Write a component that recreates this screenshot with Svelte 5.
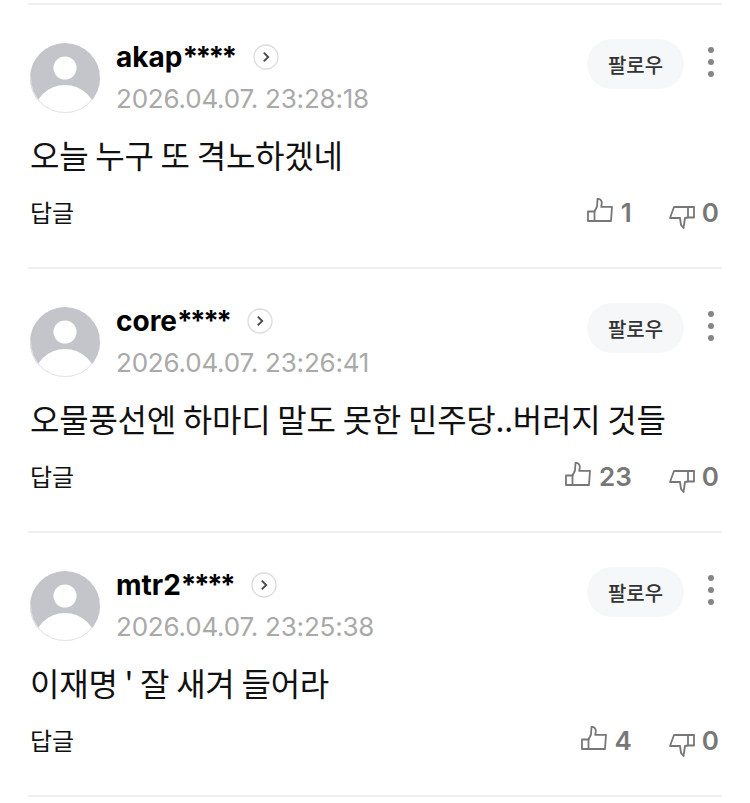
<script>
	const comments = [
		{ name: 'akap', date: '2026.04.07. 23:28:18', text: '오늘 누구 또 격노하겠네', likes: 1, dislikes: 0 },
		{ name: 'core', date: '2026.04.07. 23:26:41', text: '오물풍선엔 하마디 말도 못한 민주당..버러지 것들', likes: 23, dislikes: 0 },
		{ name: 'mtr2', date: '2026.04.07. 23:25:38', text: "이재명 ' 잘 새겨 들어라", likes: 4, dislikes: 0 }
	];
</script>

<div class="list">
	{#each comments as c, i}
		<div class="comment">
			<div class="head">
				<svg class="avatar" viewBox="0 0 70 70" width="70" height="70">
					<defs>
						<clipPath id="round{i}"><circle cx="35" cy="35" r="35" /></clipPath>
					</defs>
					<g clip-path="url(#round{i})">
						<rect width="70" height="70" fill="#c4c5ca" />
						<circle cx="35" cy="25" r="11.5" fill="#fff" />
						<ellipse cx="35" cy="72" rx="31" ry="30" fill="#fff" />
					</g>
					<circle cx="35" cy="35" r="34.5" fill="none" stroke="#e4e4e6" stroke-width="1" stroke-dasharray="88 132" stroke-dashoffset="-22" />
				</svg>
				<div class="who">
					<div class="name-row">
						<span class="name">{c.name}<span class="stars">****</span></span>
						<svg class="go" viewBox="0 0 26 26" width="26" height="26">
							<circle cx="13" cy="13" r="12" fill="#fff" stroke="#dcdcdc" stroke-width="1.3" />
							<path d="M10.8 8.6 L15.2 13 L10.8 17.4" fill="none" stroke="#4a4a4a" stroke-width="1.9" />
						</svg>
					</div>
					<div class="date">{c.date}</div>
				</div>
				<button class="follow">팔로우</button>
				<div class="more"><i></i><i></i><i></i></div>
			</div>
			<p class="text">{c.text}</p>
			<div class="foot">
				<span class="reply">답글</span>
				<div class="votes">
					<span class="vote">
						<svg viewBox="0 0 26 32" width="26" height="32" fill="none" stroke="#777" stroke-width="1.8" stroke-linejoin="round">
							<path d="M1 13.5 H7.5 V23 H1 Z" />
							<path d="M7.5 13.5 L10 8.5 L10.5 1 C13.5 0.5 15 3 14.8 5.5 L14.2 8.8 H25 L24 23 H7.5" />
						</svg>
						<b>{c.likes}</b>
					</span>
					<span class="vote down">
						<svg viewBox="0 0 26 32" width="26" height="32" fill="none" stroke="#777" stroke-width="1.8" stroke-linejoin="round">
							<path d="M25 9 H19 V19.5 H25 Z" />
							<path d="M19 9 H5 L1 20 H11 L12 27 L14.5 30 L16 20 L19 19.5" />
						</svg>
						<b>{c.dislikes}</b>
					</span>
				</div>
			</div>
		</div>
	{/each}
</div>

<style>
	:global(body) {
		margin: 0;
		background: #fff;
		font-family: "Inter", "Noto Sans CJK KR", sans-serif;
	}

	.list {
		margin: 3px 28px 0 28px;
		border-top: 2px solid #f0f0f1;
	}

	.comment {
		box-sizing: border-box;
		height: 264px;
		border-bottom: 2px solid #f0f0f1;
		padding: 34px 0 0 2px;
	}

	.head {
		display: flex;
		align-items: flex-start;
	}

	.avatar {
		margin-top: 4px;
		flex-shrink: 0;
	}

	.who {
		flex: 1;
		margin-left: 16px;
	}

	.name-row {
		display: flex;
		align-items: center;
		gap: 16px;
		height: 36px;
	}

	.name {
		font-size: 28px;
		font-weight: 700;
		color: #000;
	}

	.stars {
		letter-spacing: -2.6px;
		margin-right: 2px;
	}

	.date {
		font-size: 26px;
		letter-spacing: -0.2px;
		color: #a9a9a9;
		margin-top: 8px;
	}

	.follow {
		width: 97px;
		height: 50px;
		border: none;
		border-radius: 25px;
		background: #f6f7f9;
		color: #333;
		font: 500 20px "Noto Sans CJK KR", sans-serif;
		padding: 0;
	}

	.more {
		display: flex;
		flex-direction: column;
		gap: 6px;
		margin: 8px 8px 0 24px;
	}

	.more i {
		width: 6px;
		height: 6px;
		border-radius: 50%;
		background: #858585;
	}

	.text {
		margin: 16px 0 0 0;
		font: 400 32px "Noto Sans CJK KR", sans-serif;
		letter-spacing: -0.25px;
		line-height: 48px;
		color: #111;
	}

	.foot {
		display: flex;
		justify-content: space-between;
		align-items: center;
		margin: 14px 3px 0 0;
	}

	.reply {
		font: 400 24px "Noto Sans CJK KR", sans-serif;
		color: #111;
	}

	.votes {
		display: flex;
		align-items: center;
	}

	.vote {
		display: flex;
		align-items: center;
		gap: 8px;
	}

	.vote svg {
		margin-top: 6px;
	}

	.vote b {
		font-size: 26px;
		font-weight: 600;
		color: #777;
		margin-top: 2px;
	}

	.down {
		gap: 7px;
		margin-left: 37px;
	}
</style>
